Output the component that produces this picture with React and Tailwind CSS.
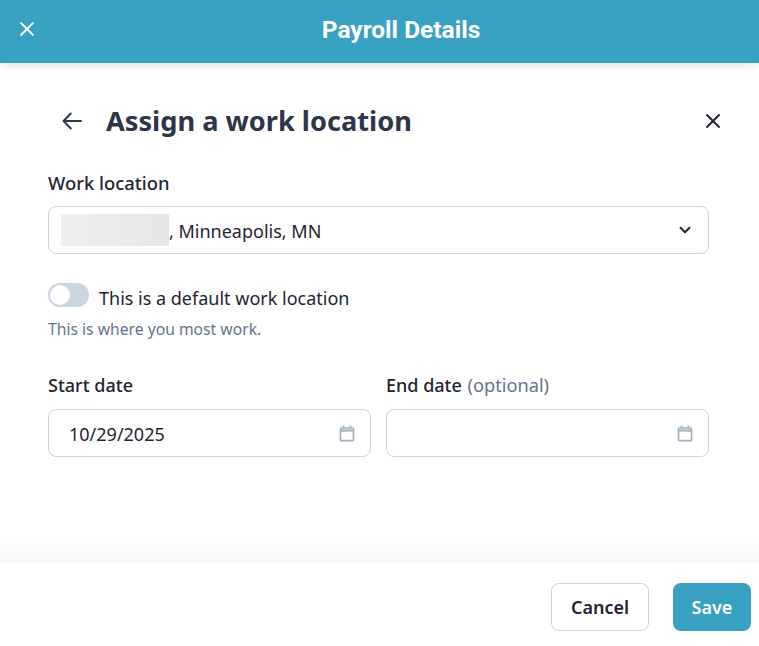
import React from 'react';
import { X, ChevronDown } from 'lucide-react';

const CalendarIcon = () => (
    <svg className="w-[16px] h-[17px] text-[#a3b1c4]" viewBox="0 0 16 17" fill="none" stroke="currentColor">
        <rect x="1.5" y="3" width="13" height="12.7" rx="1" strokeWidth="1.7" />
        <path d="M1.5 5.5h13" strokeWidth="2.2" />
        <path d="M4.5 0.5v2.6M11.5 0.5v2.6" strokeWidth="1.7" />
    </svg>
);

const DateField = ({ label, hint, value }) => (
    <div className="flex-1">
        <div className="h-[24px] text-[18px] leading-[24px] font-medium text-[#1f2431]">
            {label}
            {hint && <span className="ml-[1px] font-normal text-[18.2px] text-[#64748b]"> {hint}</span>}
        </div>
        <div className="mt-[12px] h-[48px] flex items-center justify-between pl-[20px] pr-[15px] rounded-lg border border-[#c9d5e1] bg-white text-[18px] text-[#1f2431]">
            <span className="mt-[2px]">{value}</span>
            <CalendarIcon />
        </div>
    </div>
);

export default function App() {
    return (
        <div className="w-[759px] h-[646px] flex flex-col overflow-hidden bg-white font-['Noto_Sans',sans-serif]">
            <header className="relative z-10 h-[63px] shrink-0 flex items-center justify-center pl-[43px] pb-[2px] bg-[#38a0c0] shadow-[0_2px_10px_rgba(0,0,0,0.12)]">
                <button className="absolute left-[15px] top-[17px] text-white">
                    <X size={24} strokeWidth={1.8} />
                </button>
                <h1 className="font-['Roboto',sans-serif] text-[24.5px] font-bold text-white">Payroll Details</h1>
            </header>

            <main className="flex-1 px-[48px] bg-gradient-to-b from-white from-[95%] to-[#f8f8f8]">
                <div className="h-[117px] pt-[37px] flex items-start">
                    <svg className="ml-[14px] mt-[12px] w-[20px] h-[18px] text-[#2d3648]" viewBox="0 0 20 18" fill="none" stroke="currentColor" strokeWidth="1.9" strokeLinecap="round" strokeLinejoin="round">
                        <path d="M19 9H1.5M8.8 1.5 1.5 9l7.3 7.5" />
                    </svg>
                    <h2 className="ml-[24px] h-[42px] text-[27.2px] leading-[42px] font-bold text-[#2d3648]">Assign a work location</h2>
                    <X size={24} strokeWidth={1.9} className="ml-auto mr-[-14px] mt-[9px] text-[#1f2431]" />
                </div>

                <div className="w-[661px]">
                    <div className="mt-[-9px] h-[24px] text-[18.4px] leading-[24px] font-medium text-[#1f2431]">Work location</div>
                    <div className="mt-[11px] h-[48px] flex items-center justify-between pl-[12px] pr-[14px] rounded-lg border border-[#c9d5e1] text-[18px] text-[#1f2431]">
                        <span className="flex items-center">
                            <span className="w-[108px] h-[32px] bg-gradient-to-r from-[#eeeeee] to-[#e6e6e6]" />
                            <span className="mt-[3px]">, Minneapolis, MN</span>
                        </span>
                        <ChevronDown size={18} strokeWidth={2.5} />
                    </div>

                    <div className="mt-[29px] flex items-center h-[24px]">
                        <span className="w-[41px] h-[24px] p-[2px] rounded-full bg-[#c9d5e1]">
                            <span className="block w-[20px] h-[20px] rounded-full bg-white" />
                        </span>
                        <span className="ml-[10px] mt-[7px] text-[18px] text-[#1f2431]">This is a default work location</span>
                    </div>
                    <div className="mt-[11px] h-[22px] text-[15.7px] leading-[22px] text-[#64748b]">This is where you most work.</div>

                    <div className="mt-[33px] flex gap-[15px]">
                        <DateField label="Start date" value="10/29/2025" />
                        <DateField label="End date" hint="(optional)" />
                    </div>
                </div>
            </main>

            <footer className="h-[83px] shrink-0 flex items-start justify-end gap-[24px] pt-[20px] pr-[8px] bg-white">
                <button className="w-[98px] h-[48px] rounded-lg border border-[#c9d5e1] bg-white text-[18px] font-semibold text-[#1f2431]">Cancel</button>
                <button className="w-[78px] h-[48px] rounded-lg bg-[#38a0c0] text-[18px] font-semibold text-white">Save</button>
            </footer>
        </div>
    );
}
